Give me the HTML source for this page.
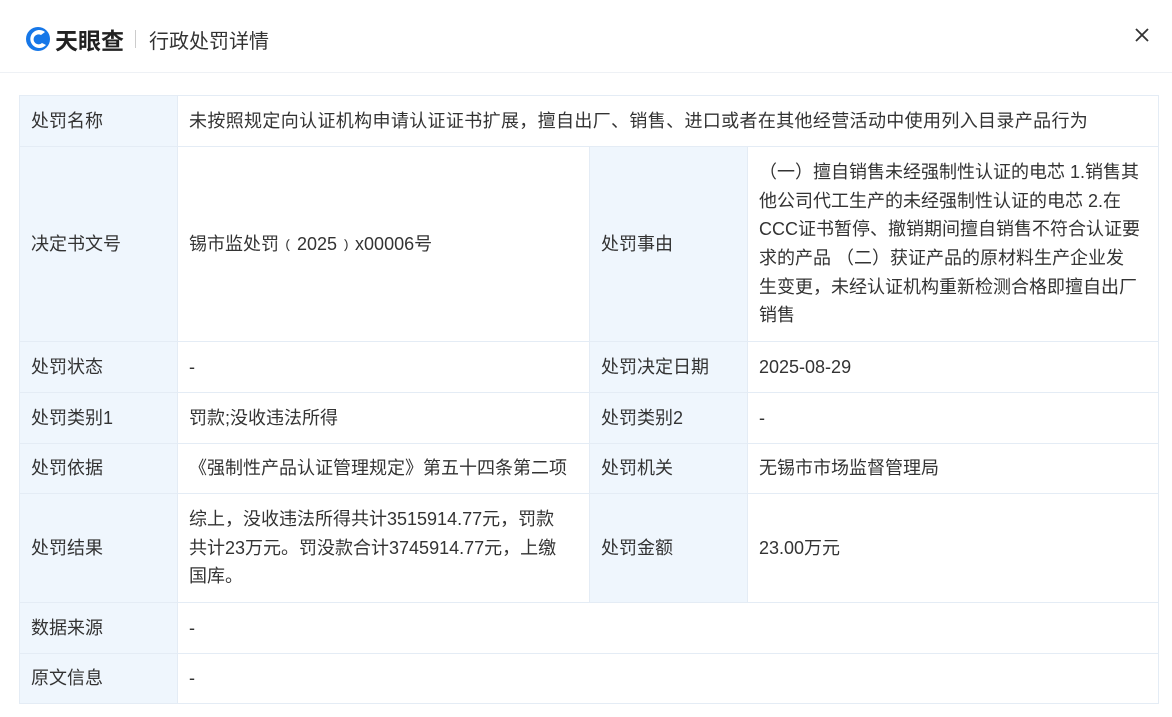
<!DOCTYPE html>
<html><head><meta charset="utf-8"><style>
body{margin:0;width:1172px;height:717px;background:#fff;font-family:"Liberation Sans","Noto Sans CJK SC",sans-serif;color:#333;overflow:hidden;position:relative}
.hd{height:72px;border-bottom:1px solid #eef1f5;position:relative}
.logo{position:absolute;left:25px;top:22px;display:flex;align-items:center}
.lt{font-size:23px;font-weight:bold;color:#222;margin-left:4px}
.sep{width:1px;height:18px;background:#ccc;margin:0 13px 0 11px}
.tt{font-size:20px;color:#333}
.x{position:absolute;right:22px;top:27px}
table{position:absolute;left:19px;top:95px;border-collapse:collapse;table-layout:fixed;width:1139px;font-size:18px}
td{border:1px solid #e4ecf5;padding:0 8px 0 11px;line-height:28.6px;vertical-align:middle}
td.l{background:#eff6fd}
</style></head><body>
<div class="hd"><div class="logo">
<svg width="26" height="26" viewBox="0 0 26 26"><circle cx="13" cy="13" r="12" fill="#1677e8"/><path d="M20 6 A9 9 0 1 0 21 19 L17 17 A5 5 0 1 1 16 9 Z" fill="#fff"/><path d="M13 13 L24 10 L24 16 Z" fill="#1677e8"/></svg>
<span class="lt">天眼查</span><span class="sep"></span><span class="tt">行政处罚详情</span></div>
<svg class="x" width="16" height="16" viewBox="0 0 16 16"><path d="M2 2L14 14M14 2L2 14" stroke="#333" stroke-width="1.8"/></svg></div>
<table>
<colgroup><col style="width:158px"><col style="width:412px"><col style="width:158px"><col style="width:411px"></colgroup>
<tr style="height:51px"><td class="l">处罚名称</td><td colspan="3" style="letter-spacing:0.35px">未按照规定向认证机构申请认证证书扩展，擅自出厂、销售、进口或者在其他经营活动中使用列入目录产品行为</td></tr>
<tr style="height:195px"><td class="l">决定书文号</td><td>锡市监处罚﹙2025﹚x00006号</td><td class="l">处罚事由</td><td style="padding-right:17px">（一）擅自销售未经强制性认证的电芯 1.销售其他公司代工生产的未经强制性认证的电芯 2.在CCC证书暂停、撤销期间擅自销售不符合认证要求的产品 （二）获证产品的原材料生产企业发生变更，未经认证机构重新检测合格即擅自出厂销售</td></tr>
<tr style="height:51px"><td class="l">处罚状态</td><td>-</td><td class="l">处罚决定日期</td><td>2025-08-29</td></tr>
<tr style="height:51px"><td class="l">处罚类别1</td><td>罚款;没收违法所得</td><td class="l">处罚类别2</td><td>-</td></tr>
<tr style="height:50px"><td class="l">处罚依据</td><td>《强制性产品认证管理规定》第五十四条第二项</td><td class="l">处罚机关</td><td>无锡市市场监督管理局</td></tr>
<tr style="height:109px"><td class="l">处罚结果</td><td style="padding-right:22px">综上，没收违法所得共计3515914.77元，罚款共计23万元。罚没款合计3745914.77元，上缴国库。</td><td class="l">处罚金额</td><td>23.00万元</td></tr>
<tr style="height:51px"><td class="l">数据来源</td><td colspan="3">-</td></tr>
<tr style="height:50px"><td class="l">原文信息</td><td colspan="3">-</td></tr>
</table>
</body></html>
